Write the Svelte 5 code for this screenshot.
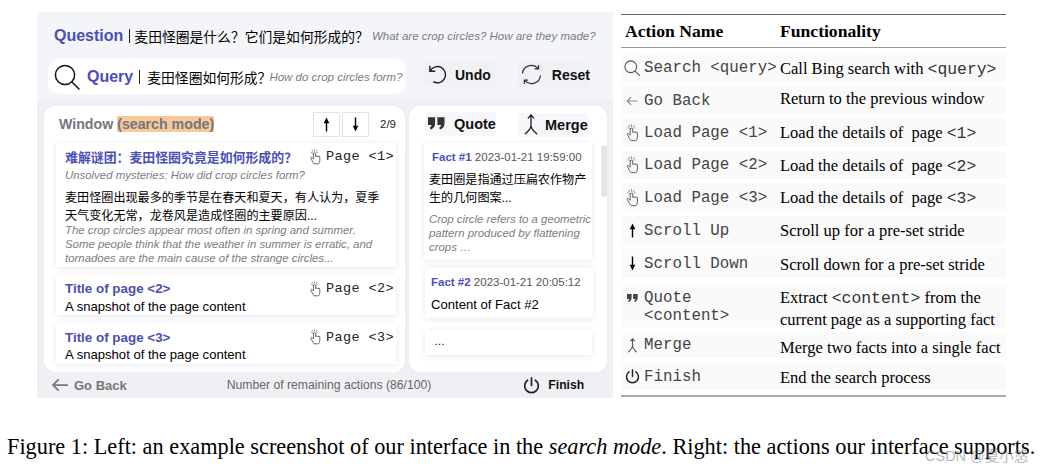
<script>
  const rows = [
    { icon: 'search', name: 'Search <query>', h: 30, gap: 3, fy: 2 },
    { icon: 'back', name: 'Go Back', h: 29, gap: 3, fy: -4 },
    { icon: 'hand', name: 'Load Page <1>', h: 29, gap: 4, fy: 0 },
    { icon: 'hand', name: 'Load Page <2>', h: 28, gap: 4, fy: 2 },
    { icon: 'hand', name: 'Load Page <3>', h: 29, gap: 4, fy: 0 },
    { icon: 'up', name: 'Scroll Up', h: 29, gap: 4, fy: 0 },
    { icon: 'down', name: 'Scroll Down', h: 29, gap: 6, fy: 2 },
    { icon: 'quote', name: 'Quote <content>', h: 43, gap: 5, top: true, fy: 3 },
    { icon: 'merge', name: 'Merge', h: 26, gap: 5, fy: 4 },
    { icon: 'power', name: 'Finish', h: 27, gap: 0, fy: 2 }
  ];
</script>

{#snippet hand(c = '#444', w = 12, h = 16)}
  <svg class="hand" viewBox="0 0 14 20" width={w} height={h} aria-hidden="true">
    <g fill="none" stroke={c} stroke-width="1" stroke-linejoin="round" stroke-linecap="round">
      <path d="M5 5.500v7L3.200 10.700c-.8-.7-2 .1-1.400 1.100l2.600 4.400c.4.900 1 1.800 1.600 2.300h5.400c1-1 1.600-2.400 1.600-4V10c0-1.300-1.600-1.300-1.700-.3 0-1.200-1.600-1.200-1.700-.2 0-1.200-1.700-1.200-1.800-.1V5.500c0-1.300-2.800-1.300-2.800 0z"/>
      <path d="M6.400 0.500v2.200M3.400 1.400l1 1.700M9.400 1.400l-1 1.700M2.300 4.200l1.300.4M10.500 4.200l-1.300.4" stroke="#888"/>
    </g>
  </svg>
{/snippet}

{#snippet searchIcon(size, sw, c)}
  <svg viewBox="0 0 26 26" width={size} height={size} aria-hidden="true">
    <circle cx="11" cy="11" r="9.600" fill="none" stroke={c} stroke-width={sw}/>
    <path d="M18 18l7 7" stroke={c} stroke-width={sw} stroke-linecap="round"/>
  </svg>
{/snippet}

{#snippet upArrow(c = '#000')}
  <svg viewBox="0 0 8 16" width="7" height="15" aria-hidden="true"><path d="M4 0L7.200 6.500H4.800V16H3.200V6.500H.8z" fill={c}/></svg>
{/snippet}
{#snippet downArrow(c = '#000')}
  <svg viewBox="0 0 8 16" width="7" height="15" aria-hidden="true"><path d="M4 16L7.200 9.500H4.800V0H3.200V9.500H.8z" fill={c}/></svg>
{/snippet}
{#snippet quoteIcon(w, h, c)}
  <svg viewBox="0 0 18 13" width={w} height={h} aria-hidden="true"><path d="M0 0h7.500v6.500C7.500 10 5.500 12 2.500 13L2 10.500c1.200-.4 1.700-1.200 1.800-2.500H0zM10 0h7.500v6.500c0 3.500-2 5.500-5 6.500L12 10.500c1.200-.4 1.700-1.200 1.800-2.500H10z" fill={c}/></svg>
{/snippet}
{#snippet mergeIcon(w, h, c, sw = 1.5)}
  <svg viewBox="0 0 18 24" width={w} height={h} aria-hidden="true"><path d="M9 1v12c0 4-3 6-7 10M9 13c0 4 3 6 7 10M5.500 5L9 1l3.500 4" fill="none" stroke={c} stroke-width={sw}/></svg>
{/snippet}
{#snippet powerIcon(size, sw, c)}
  <svg viewBox="0 0 20 20" width={size} height={size} aria-hidden="true"><path d="M5.500 3.800a8 8 0 1 0 9 0M10 1v9" fill="none" stroke={c} stroke-width={sw} stroke-linecap="round"/></svg>
{/snippet}
{#snippet backArrow(w, h, c, sw)}
  <svg viewBox="0 0 20 16" width={w} height={h} aria-hidden="true"><path d="M19 8H2M8.500 1.500L2 8l6.500 6.500" fill="none" stroke={c} stroke-width={sw}/></svg>
{/snippet}

<div class="page">
  <div class="figure">
    <section class="ui">
      <div class="upper">
        <div class="question">
          <b class="blue big">Question</b><i class="bar"></i><span class="zh q">麦田怪圈是什么？它们是如何形成的？</span><em class="en">What are crop circles? How are they made?</em>
        </div>
        <div class="queryrow">
          <div class="query">
            {@render searchIcon(26, 1.5, '#111')}
            <b class="blue big q2">Query</b><i class="bar"></i><span class="zh q">麦田怪圈如何形成？</span><em class="en e2">How do crop circles form?</em>
          </div>
          <div class="btn undo">
            <svg viewBox="0 0 22 22" width="21" height="21" aria-hidden="true"><path d="M3.500 7A8.500 8.500 0 1 1 6.500 18.500M3 1.800V7.500h5.700" fill="none" stroke="#222" stroke-width="1.500"/></svg>
            <b>Undo</b>
          </div>
          <div class="btn reset">
            <svg viewBox="0 0 22 22" width="21" height="21" aria-hidden="true"><path d="M1.500 10A9.500 9.500 0 0 1 18 4.500M20.500 12A9.500 9.500 0 0 1 4 17.500M18.500 1v4h-4M3.500 21v-4h4" fill="none" stroke="#333" stroke-width="1.300"/></svg>
            <b>Reset</b>
          </div>
        </div>
      </div>

      <div class="lower">
        <div class="panes">
          <div class="pane win">
            <div class="winhead">
              <b class="wintitle">Window <mark>(search mode)</mark></b>
              <div class="arrows">
                <span class="arrow">{@render upArrow()}</span>
                <span class="arrow">{@render downArrow()}</span>
              </div>
              <span class="count">2/9</span>
            </div>
            <article class="card c1">
              <div class="cardtop"><b class="blue title zh">难解谜团：麦田怪圈究竟是如何形成的？</b><span class="pg">{@render hand()}<code>Page &lt;1&gt;</code></span></div>
              <em class="sub">Unsolved mysteries: How did crop circles form?</em>
              <p class="zh body">麦田怪圈出现最多的季节是在春天和夏天，有人认为，夏季天气变化无常，龙卷风是造成怪圈的主要原因...</p>
              <em class="sub para">The crop circles appear most often in spring and summer. Some people think that the weather in summer is erratic, and tornadoes are the main cause of the strange circles...</em>
            </article>
            <article class="card c2">
              <div class="cardtop"><b class="blue title ent">Title of page &lt;2&gt;</b><span class="pg">{@render hand()}<code>Page &lt;2&gt;</code></span></div>
              <p class="snap">A snapshot of the page content</p>
            </article>
            <article class="card c2">
              <div class="cardtop"><b class="blue title ent">Title of page &lt;3&gt;</b><span class="pg">{@render hand()}<code>Page &lt;3&gt;</code></span></div>
              <p class="snap">A snapshot of the page content</p>
            </article>
          </div>

          <div class="pane facts">
            <div class="facthead">
              <div class="btn fq">{@render quoteIcon(17, 13, '#333')}<b>Quote</b></div>
              <div class="btn fm">{@render mergeIcon(16, 21, '#222')}<b>Merge</b></div>
            </div>
            <article class="card f1">
              <div class="factline"><b class="blue">Fact #1</b> 2023-01-21 19:59:00</div>
              <p class="zh fbody">麦田圈是指通过压扁农作物产生的几何图案...</p>
              <em class="sub fen">Crop circle refers to a geometric pattern produced by flattening crops …</em>
            </article>
            <article class="card f2">
              <div class="factline"><b class="blue">Fact #2</b> 2023-01-21 20:05:12</div>
              <p class="snap fc">Content of Fact #2</p>
            </article>
            <article class="card f3">…</article>
            <div class="scrollbar"></div>
          </div>
        </div>

        <footer class="foot">
          <span class="goback">{@render backArrow(18, 14, '#777', 2)}<b>Go Back</b></span>
          <span class="remain">Number of remaining actions (86/100)</span>
          <span class="finish">{@render powerIcon(17, 2, '#222')}<b>Finish</b></span>
        </footer>
      </div>
    </section>

    <section class="table">
      <div class="thead"><b>Action Name</b><b>Functionality</b></div>
      <div class="tbody">
        {#each rows as r, i}
          <div class="row" style="height:{r.h}px;margin-bottom:{r.gap}px">
            <div class="act" class:top={r.top}>
              <span class="ic">
                {#if r.icon === 'search'}{@render searchIcon(16, 1.8, '#555')}
                {:else if r.icon === 'back'}{@render backArrow(12, 10, '#888', 1.800)}
                {:else if r.icon === 'hand'}{@render hand('#555', 14, 18)}
                {:else if r.icon === 'up'}{@render upArrow()}
                {:else if r.icon === 'down'}{@render downArrow()}
                {:else if r.icon === 'quote'}{@render quoteIcon(11, 8, '#444')}
                {:else if r.icon === 'merge'}{@render mergeIcon(11, 15, '#555', 1.800)}
                {:else}{@render powerIcon(15, 2, '#222')}{/if}
              </span>
              <code>{r.name}</code>
            </div>
            <div class="fn" style="margin-top:{r.fy}px">
              {#if i === 0}Call Bing search with <code>&lt;query&gt;</code>
              {:else if i === 1}Return to the previous window
              {:else if i === 2}Load the details of&nbsp; page <code>&lt;1&gt;</code>
              {:else if i === 3}Load the details of&nbsp; page <code>&lt;2&gt;</code>
              {:else if i === 4}Load the details of&nbsp; page <code>&lt;3&gt;</code>
              {:else if i === 5}Scroll up for a pre-set stride
              {:else if i === 6}Scroll down for a pre-set stride
              {:else if i === 7}Extract <code>&lt;content&gt;</code> from the current page as a supporting fact
              {:else if i === 8}Merge two facts into a single fact
              {:else}End the search process{/if}
            </div>
          </div>
        {/each}
      </div>
    </section>
  </div>

  <p class="caption">Figure 1: Left: an example screenshot of our interface in the <i>search mode</i>. Right: the actions our interface supports.</p>
  <span class="mark">CSDN @夏小悠</span>
</div>

<style>
  :global(body) { margin: 0; background: #fff; }
  .page { position: relative; width: 1042px; height: 469px; overflow: hidden; font-family: "Liberation Sans", "Noto Sans CJK SC", sans-serif; color: #000; }
  .figure { display: flex; align-items: flex-start; padding: 12px 0 0 37px; gap: 8px; }
  p { margin: 0; }
  code { font-family: "Liberation Mono", monospace; }
  .zh { font-family: "Liberation Sans", "Noto Sans CJK SC", sans-serif; }
  .blue { color: #4a4fb5; }
  em { color: #7b7b85; font-style: italic; }

  .ui { width: 576px; height: 386px; display: flex; flex-direction: column; flex: none; }
  .upper { height: 87px; background: #f4f5f9; flex: none; padding: 12px 0 0 11px; box-sizing: border-box; }
  .question { display: flex; align-items: center; height: 23px; padding-left: 6px; white-space: nowrap; }
  .big { font-size: 16px; }
  .bar { display: inline-block; width: 1px; height: 14px; background: #222; margin: 0 4px 0 6px; }
  .q { font-size: 13.800px; }
  .en { font-size: 11.500px; margin-left: 3px; }
  .queryrow { display: flex; align-items: flex-start; margin-top: 12px; height: 35px; }
  .query { width: 358px; height: 35px; background: #fff; border-radius: 12px; display: flex; align-items: center; padding-left: 6px; box-sizing: border-box; white-space: nowrap; flex: none; }
  .q2 { margin-left: 7px; }
  .query .bar { margin-right: 7px; }
  .e2 { margin-left: -2px; }
  .btn { display: flex; align-items: center; background: #f0f1f5; border-radius: 4px; }
  .btn b { font-size: 14px; color: #111; }
  .undo { margin: 3px 0 0 18px; width: 71px; height: 25px; padding-left: 3px; gap: 7px; box-sizing: border-box; }
  .reset { margin: 3px 0 0 23px; width: 72px; height: 25px; padding-left: 3px; gap: 10px; box-sizing: border-box; }

  .lower { flex: 1; background: #eff0f4; padding: 7px 6px 0 7px; display: flex; flex-direction: column; min-height: 0; }
  .panes { display: flex; gap: 4px; height: 266px; flex: none; }
  .pane { background: #fff; border-radius: 12px; position: relative; box-sizing: border-box; }
  .win { width: 361px; padding: 0 9px 0 12px; display: flex; flex-direction: column; }
  .winhead { display: flex; align-items: center; height: 37px; }
  .wintitle { font-size: 14.200px; color: #75757d; padding-left: 3px; }
  mark { background: #f7c99a; color: #75757d; }
  .arrows { display: flex; gap: 2px; margin-left: auto; }
  .arrow { width: 27px; height: 25px; border: 1px solid #e4e4e4; box-sizing: border-box; display: flex; align-items: center; justify-content: center; }
  .count { font-size: 11.500px; color: #222; margin: 0 0 0 11px; }
  .card { background: #fff; box-shadow: 0 1px 6px rgba(60, 60, 80, .12); box-sizing: border-box; }
  .c1 { height: 125px; padding: 5px 2px 0 9px; margin-bottom: 8px; }
  .c2 { height: 41px; padding: 5px 2px 0 9px; margin-bottom: 8px; }
  .cardtop { display: flex; justify-content: space-between; align-items: center; height: 18px; white-space: nowrap; }
  .title { font-size: 12.900px; }
  .ent { font-size: 13.400px; }
  .pg { display: flex; align-items: center; gap: 5px; }
  .pg code { font-size: 13.500px; color: #222; letter-spacing: .4px; }
  .sub { display: block; font-size: 11.400px; line-height: 14px; margin-top: 2px; }
  .body { font-size: 12.100px; line-height: 18px; margin-top: 7px; padding-right: 6px; }
  .para { margin-top: -2px; max-width: 315px; }
  .snap { font-size: 13.100px; margin-top: 1px; }

  .facts { width: 198px; padding: 0 15px; }
  .facthead { display: flex; height: 37px; align-items: center; justify-content: space-between; }
  .fq { width: 71px; height: 24px; gap: 9px; padding-left: 3px; box-sizing: border-box; margin-left: 1px; margin-top: -2px; background: #f6f7fa; }
  .fq b { font-size: 14.500px; }
  .fm { width: 71px; height: 24px; gap: 6px; padding-left: 5px; box-sizing: border-box; margin-right: 3px; background: #f6f7fa; }
  .fm b { font-size: 14.500px; }
  .f1 { height: 117px; padding: 8px 0 0 5px; width: 168px; }
  .factline { font-size: 11.500px; color: #555; padding-left: 3px; white-space: nowrap; }
  .fbody { font-size: 12.100px; line-height: 18px; margin-top: 8px; padding-right: 5px; }
  .fen { font-size: 11.400px; line-height: 14px; margin-top: 5px; white-space: normal; }
  .f2 { height: 50px; margin: 8px 0 0 1px; padding: 8px 0 0 6px; width: 168px; }
  .f2 .factline { padding-left: 0; }
  .fc { margin-top: 9px; }
  .f3 { height: 25px; margin: 12px 0 0 1px; padding: 5px 0 0 9px; width: 167px; font-size: 11px; }
  .scrollbar { position: absolute; left: 192px; top: 39px; width: 6px; height: 52px; background: #e6e6e8; border-radius: 3px; }

  .foot { flex: 1; display: flex; align-items: center; position: relative; padding-left: 7px; }
  .goback { display: flex; align-items: center; gap: 5px; }
  .goback b { font-size: 13px; color: #777; }
  .remain { font-size: 12.200px; color: #666; margin-left: 100px; }
  .finish { display: flex; align-items: center; gap: 8px; margin-left: 92px; }
  .finish b { font-size: 12.200px; color: #111; }

  .table { width: 385px; margin-top: 2px; flex: none; font-family: "Liberation Serif", serif; color: #000; }
  .thead { display: grid; grid-template-columns: 155px 1fr; align-items: center; border-top: 1px solid #666; border-bottom: 1px solid #999; padding-left: 4px; font-size: 17.600px; padding-top: 1px; box-sizing: border-box; height: 34px; }
  .tbody { padding-top: 5px; border-bottom: 2px solid #aaa; padding-bottom: 5px; }
  .row { display: grid; grid-template-columns: 157px 1fr; background: #fafafa; padding-left: 1px; margin-left: 1px; align-items: center; font-size: 16.500px; box-sizing: border-box; }
  .act { display: flex; align-items: center; gap: 3px; line-height: 18px; }
  .act.top { align-items: flex-start; }
  .act code { font-size: 15.800px; color: #444; }
  .ic { width: 18px; display: flex; justify-content: center; flex: none; height: 18px; align-items: center; }
  .fn { line-height: 21px; white-space: normal; }
  .fn code { font-size: 16.400px; color: #333; }

  .caption { position: absolute; left: 7px; top: 434px; font-family: "Liberation Serif", serif; font-size: 22.300px; white-space: nowrap; }
  .mark { position: absolute; left: 925px; top: 444px; font-size: 14.500px; color: rgba(120, 120, 120, .55); white-space: nowrap; }
</style>
